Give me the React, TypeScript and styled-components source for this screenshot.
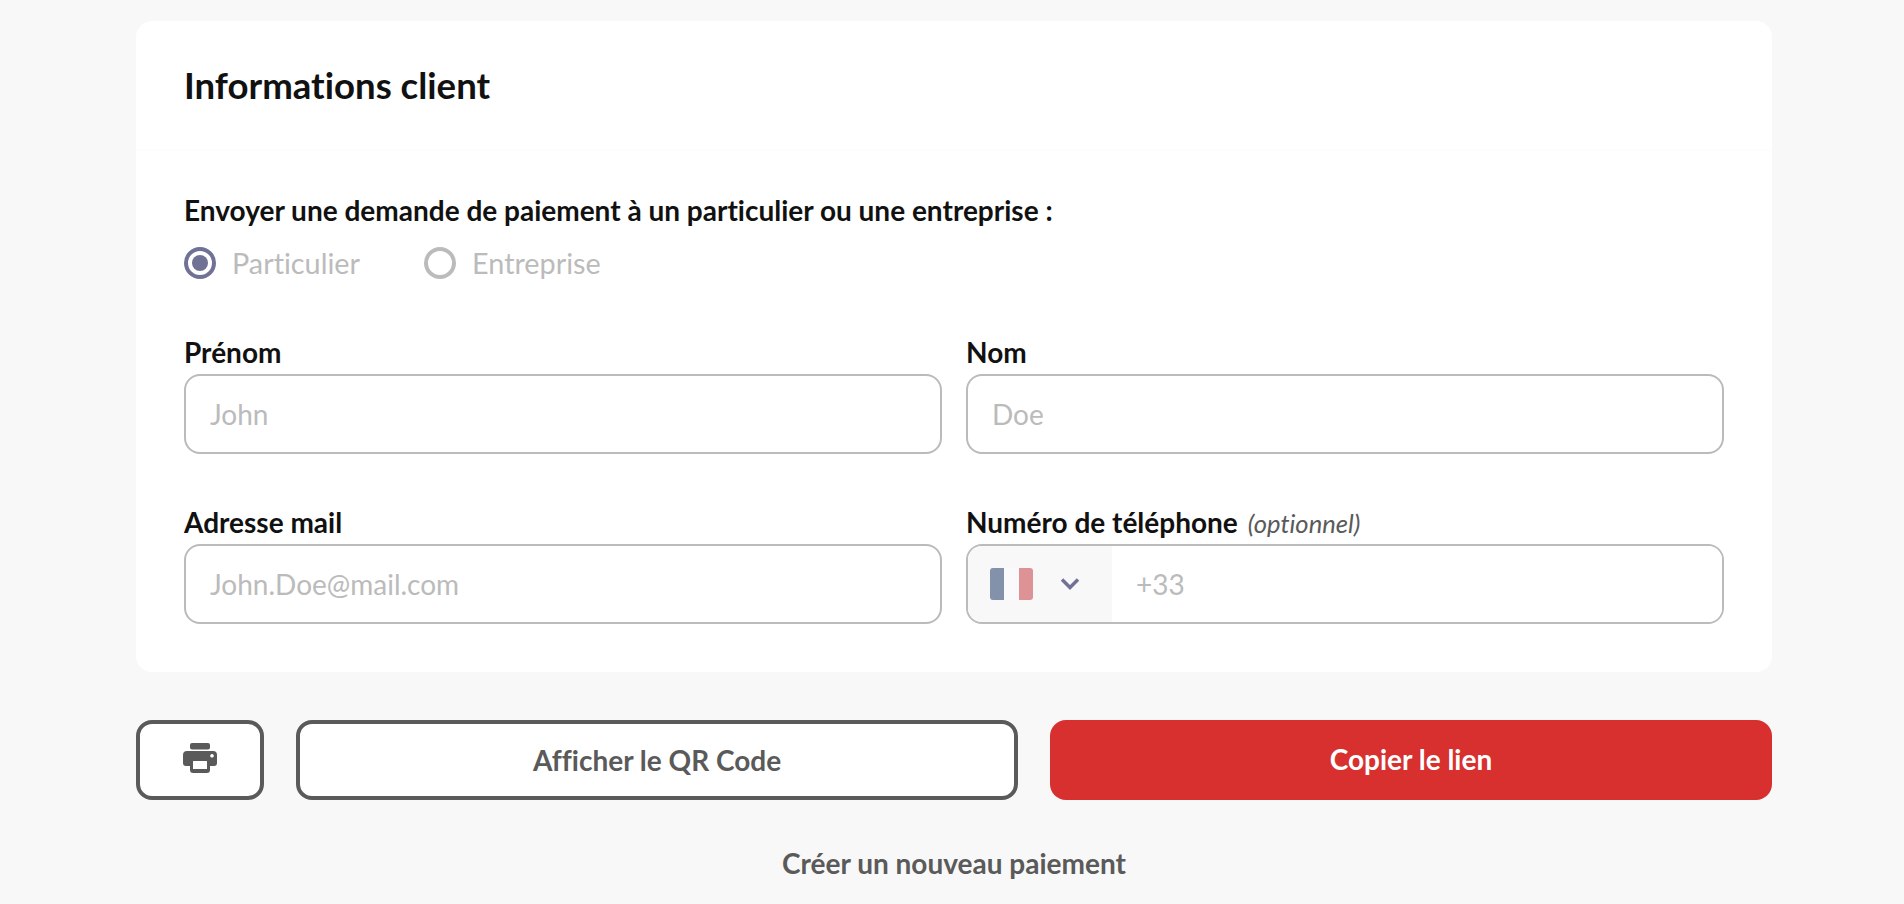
import React from "react";
import styled, { createGlobalStyle } from "styled-components";

const Global = createGlobalStyle`
  html, body { margin: 0; padding: 0; background: #f8f8f8; }
  body {
    font-family: Lato, "Liberation Sans", sans-serif;
    color: #111;
    font-variant-ligatures: none;
  }
  input, button { font-variant-ligatures: none; }
`;

const Page = styled.main`
  width: 1636px;
  margin: 0 0 0 136px;
  padding: 21px 0 0;
  height: 883px;
  overflow: hidden;
  display: flex;
  flex-direction: column;
`;

const Card = styled.section`
  background: #fff;
  border-radius: 16px;
`;

const CardHead = styled.header`
  height: 130px;
  padding: 0 48px;
  display: flex;
  align-items: center;
  border-bottom: 2px solid #fdfdfd;
  box-sizing: border-box;
`;

const Title = styled.h2`
  margin: 0;
  font-size: 36.6px;
  font-weight: 700;
  color: #111;
`;

const CardBody = styled.div`
  padding: 42px 48px 48px;
`;

const Question = styled.p`
  margin: 0;
  font-size: 28px;
  line-height: 34px;
  font-weight: 700;
`;

const RadioRow = styled.div`
  display: flex;
  gap: 64px;
  margin-top: 18px;
  height: 36px;
  align-items: center;
`;

const RadioItem = styled.label`
  display: flex;
  align-items: center;
  gap: 16px;
  font-size: 28.8px;
  color: #bbb;
`;

const RadioDot = styled.span<{ $on?: boolean }>`
  width: 32px;
  height: 32px;
  box-sizing: border-box;
  border-radius: 50%;
  border: 4px solid ${(p) => (p.$on ? "#717196" : "#bbb")};
  display: flex;
  align-items: center;
  justify-content: center;
  &::after {
    content: "";
    display: ${(p) => (p.$on ? "block" : "none")};
    width: 16px;
    height: 16px;
    border-radius: 50%;
    background: #717196;
  }
`;

const FieldGrid = styled.div`
  display: grid;
  grid-template-columns: 1fr 1fr;
  column-gap: 24px;
  row-gap: 51px;
  margin-top: 54px;
`;

const Field = styled.div`
  display: flex;
  flex-direction: column;
  gap: 5px;
`;

const Label = styled.label`
  font-size: 28px;
  line-height: 34px;
  font-weight: 700;
`;

const Optional = styled.em`
  font-size: 25.6px;
  line-height: 1;
  font-weight: 400;
  font-style: italic;
  color: #5a5a5a;
  margin-left: 10px;
`;

const Input = styled.input`
  height: 80px;
  box-sizing: border-box;
  border: 2px solid #bbb;
  border-radius: 16px;
  padding: 0 24px;
  background: #fff;
  font-family: inherit;
  font-size: 28px;
  outline: none;
  &::placeholder { color: #bbb; opacity: 1; }
`;

const PhoneBox = styled.div`
  height: 80px;
  box-sizing: border-box;
  border: 2px solid #bbb;
  border-radius: 16px;
  display: flex;
  overflow: hidden;
`;

const FlagSelect = styled.div`
  width: 144px;
  background: #f8f8f8;
  display: flex;
  align-items: center;
  padding-left: 22px;
  box-sizing: border-box;
  gap: 27px;
`;

const Flag = styled.span`
  width: 43px;
  height: 32px;
  border-radius: 3px;
  overflow: hidden;
  display: grid;
  grid-template-columns: 1fr 1fr 1fr;
`;

const FlagBand = styled.span<{ $c: string }>`
  background: ${(p) => p.$c};
`;

const PhoneInput = styled.input`
  flex: 1;
  min-width: 0;
  border: 0;
  outline: none;
  padding: 0 24px;
  font-family: inherit;
  font-size: 28px;
  &::placeholder { color: #bbb; opacity: 1; }
`;

const Actions = styled.div`
  display: grid;
  grid-template-columns: 128px 1fr 1fr;
  column-gap: 32px;
  margin-top: 48px;
`;

const OutlineButton = styled.button`
  height: 80px;
  box-sizing: border-box;
  border: 4px solid #5a5a5a;
  border-radius: 16px;
  background: #fff;
  color: #5a5a5a;
  font-family: inherit;
  font-size: 28px;
  font-weight: 700;
  display: flex;
  align-items: center;
  justify-content: center;
  padding: 0 0 1px;
`;

const PrintGlyph = styled.svg`
  margin-bottom: 3px;
`;

const PrimaryButton = styled.button`
  height: 80px;
  border: 0;
  padding: 0 0 2px;
  border-radius: 16px;
  background: #d7302f;
  color: #fff;
  font-family: inherit;
  font-size: 28px;
  font-weight: 700;
`;

const NewPayment = styled.a`
  margin-top: 46px;
  text-align: center;
  font-size: 28px;
  line-height: 34px;
  font-weight: 700;
  color: #5a5a5a;
`;

export default function App() {
  return (
    <>
      <Global />
      <Page>
        <Card>
          <CardHead>
            <Title>Informations client</Title>
          </CardHead>
          <CardBody>
            <Question>Envoyer une demande de paiement à un particulier ou une entreprise :</Question>
            <RadioRow>
              <RadioItem><RadioDot $on />Particulier</RadioItem>
              <RadioItem><RadioDot />Entreprise</RadioItem>
            </RadioRow>
            <FieldGrid>
              <Field>
                <Label>Prénom</Label>
                <Input placeholder="John" />
              </Field>
              <Field>
                <Label>Nom</Label>
                <Input placeholder="Doe" />
              </Field>
              <Field>
                <Label>Adresse mail</Label>
                <Input placeholder="John.Doe@mail.com" />
              </Field>
              <Field>
                <Label>Numéro de téléphone<Optional>(optionnel)</Optional></Label>
                <PhoneBox>
                  <FlagSelect>
                    <Flag>
                      <FlagBand $c="#8391ab" />
                      <FlagBand $c="#fafafc" />
                      <FlagBand $c="#dd9295" />
                    </Flag>
                    <svg width="20" height="12" viewBox="0 0 20 12" fill="none" stroke="#717196" strokeWidth="3.4">
                      <path d="M2 1.5 L10 9.5 L18 1.5" />
                    </svg>
                  </FlagSelect>
                  <PhoneInput placeholder="+33" />
                </PhoneBox>
              </Field>
            </FieldGrid>
          </CardBody>
        </Card>
        <Actions>
          <OutlineButton aria-label="Imprimer">
            <PrintGlyph width="34" height="30" viewBox="0 0 34 30" fill="#5a5a5a">
              <rect x="7" y="0" width="20" height="6.5" rx="2" />
              <path fillRule="evenodd" d="M4 8 H30 a4 4 0 0 1 4 4 V20 a3 3 0 0 1 -3 3 H27 V27 a3 3 0 0 1 -3 3 H10 a3 3 0 0 1 -3 -3 V23 H3 a3 3 0 0 1 -3 -3 V12 a4 4 0 0 1 4 -4 Z M10 18 V26 H24 V18 Z M29 11 a1.8 1.8 0 1 0 0.01 0 Z" />
            </PrintGlyph>
          </OutlineButton>
          <OutlineButton>Afficher le QR Code</OutlineButton>
          <PrimaryButton>Copier le lien</PrimaryButton>
        </Actions>
        <NewPayment>Créer un nouveau paiement</NewPayment>
      </Page>
    </>
  );
}
